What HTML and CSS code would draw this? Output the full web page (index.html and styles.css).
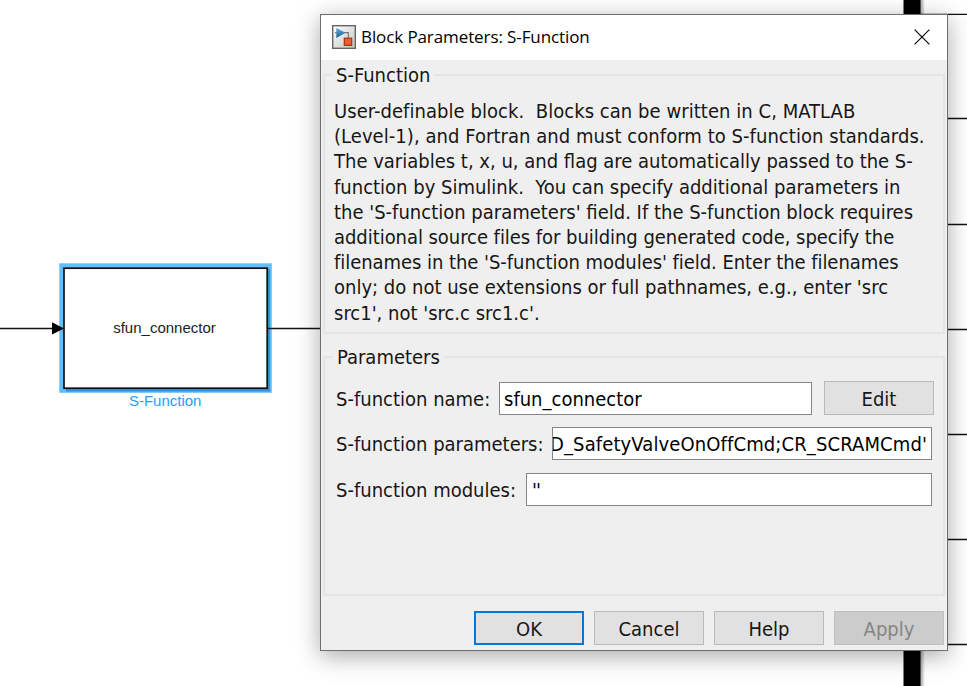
FILE: index.html
```html
<!DOCTYPE html>
<html lang="en">
<head>
<meta charset="utf-8">
<title>Block Parameters: S-Function</title>
<link rel="stylesheet" href="styles.css">
</head>
<body>
<main class="canvas">
  <svg class="diagram" width="967" height="686" viewBox="0 0 967 686">
    <defs>
      <linearGradient id="barShade"><stop offset="0" stop-color="#999"/><stop offset="1" stop-color="#fff"/></linearGradient>
    </defs>
    <rect x="920" y="0" width="5" height="686" fill="url(#barShade)"/>
    <rect x="903.5" y="0" width="17" height="686" fill="#000"/>
    <path d="M0 328.5H54M268 328.5H330M920 14.3h47M940 118.5h27M940 224.5h27M940 329.5h27M940 434.5h27M940 539.5h27M940 644.5h27" stroke="#111" stroke-width="1.3" fill="none"/>
    <rect x="59.3" y="263.3" width="212.5" height="129.5" fill="#62bdfb"/>
    <path d="M268.5 269v121H66" fill="none" stroke="#2f83c4" stroke-width="3" opacity=".75"/>
    <rect x="64" y="268.2" width="203.2" height="120" fill="#fff" stroke="#111" stroke-width="1.7"/>
    <path d="M268 328.5h4" stroke="#111" stroke-width="1.3"/>
    <path d="M52 322.3L64 328.5L52 334.5Z" fill="#000"/>
    <text class="block-text" x="164.5" y="333" text-anchor="middle">sfun_connector</text>
    <text class="block-name" x="165.2" y="406.3" text-anchor="middle">S-Function</text>
  </svg>

  <section class="dialog">
    <header class="titlebar">
      <svg class="app-icon" width="24" height="24" viewBox="0 0 24 24">
        <defs>
          <linearGradient id="face" x2="1" y2="1"><stop offset="0" stop-color="#fff"/><stop offset="1" stop-color="#c4c4c4"/></linearGradient>
          <linearGradient id="tri" x2="0" y2="1"><stop offset="0" stop-color="#5fb0dc"/><stop offset="1" stop-color="#15608f"/></linearGradient>
        </defs>
        <rect x=".7" y=".7" width="22.6" height="22.6" fill="url(#face)" stroke="#666" stroke-width="1.4"/>
        <path d="M3 7.7H16.3V13" fill="none" stroke="#777" stroke-width="1.2"/>
        <path d="M4.3 3L13.5 7.7L4.3 13Z" fill="url(#tri)"/>
        <rect x="12.3" y="13.2" width="7.4" height="7.2" fill="#e4602c" stroke="#a8320c" stroke-width="1.2"/>
      </svg>
      <h1>Block Parameters: S-Function</h1>
      <svg class="close" width="16" height="16" viewBox="0 0 16 16"><path d="M.6.6L15.4 15.4M15.4.6L.6 15.4" stroke="#000" stroke-width="1.15"/></svg>
    </header>

    <div class="content">
      <fieldset class="group about">
        <legend>S-Function</legend>
        <p>
          <span class="wide">User-definable block.&nbsp; Blocks can be written in C, MATLAB</span>
          <span class="wide">(Level-1), and Fortran and must conform to S-function standards.</span>
          <span>The variables t, x, u, and flag are automatically passed to the S-</span>
          <span>function by Simulink.&nbsp; You can specify additional parameters in</span>
          <span>the 'S-function parameters' field. If the S-function block requires</span>
          <span class="tight">additional source files for building generated code, specify the</span>
          <span class="tight">filenames in the 'S-function modules' field. Enter the filenames</span>
          <span>only; do not use extensions or full pathnames, e.g., enter 'src</span>
          <span>src1', not 'src.c src1.c'.</span>
        </p>
      </fieldset>

      <fieldset class="group params">
        <legend>Parameters</legend>
        <div class="row"><span class="label name">S-function name:</span><div class="field">sfun_connector</div><button class="edit">Edit</button></div>
        <div class="row"><span class="label parameters">S-function parameters:</span><div class="field scrolled"><span>D_SafetyValveOnOffCmd;CR_SCRAMCmd'</span></div></div>
        <div class="row"><span class="label modules">S-function modules:</span><div class="field quotes">''</div></div>
      </fieldset>
    </div>

    <footer class="actions">
      <button class="primary">OK</button>
      <button>Cancel</button>
      <button>Help</button>
      <button disabled>Apply</button>
    </footer>
  </section>
</main>
</body>
</html>
```
FILE: styles.css
```css
* { box-sizing: border-box; }
body { margin: 0; overflow: hidden; background: #fff; }

.canvas { position: relative; width: 967px; height: 686px; overflow: hidden; }
.diagram { display: block; }
.block-text, .block-name { font: 15px "Liberation Sans", Arial, sans-serif; fill: #222; }
.block-name { fill: #2a9df8; }

.dialog {
  position: absolute;
  left: 320px;
  top: 14px;
  width: 628px;
  height: 637px;
  display: flex;
  flex-direction: column;
  border: 1px solid #6e6e6e;
  background: #efefef;
  box-shadow: 0 5px 22px rgba(0, 0, 0, .34);
  color: #161616;
  font: 20px "DejaVu Sans Condensed", "DejaVu Sans", Tahoma, sans-serif;
}

.titlebar { display: flex; align-items: center; flex: none; height: 45px; padding: 0 17px 2px 11px; background: #fff; }
.app-icon { flex: none; }
.titlebar h1 { flex: 1; margin: 0 0 0 5px; color: #000; font: 400 17px/24px "Open Sans", "Segoe UI", sans-serif; letter-spacing: -.1px; }

.content { display: flex; flex-direction: column; padding: 2px 2px 0; }
.group { min-width: 0; margin: 0; padding: 0 11px; border: 2px solid #e4e4e4; }
.group legend { margin-left: -4px; padding: 0 4px; line-height: 26px; }
.about { height: 272px; }
.about p { margin: 11px 0 0 -2px; line-height: 25.2px; }
.about span { display: block; white-space: nowrap; }
.about .wide { letter-spacing: .05px; }
.about .tight { letter-spacing: -.05px; }
.params { height: 252px; margin-top: 10px; }
.params legend { margin-left: -3px; }

.row { display: flex; align-items: center; height: 34px; margin-bottom: 11.7px; }
.params legend + .row { margin-top: 11px; }
.label { flex: none; padding-top: 1px; white-space: nowrap; }
.label.name { width: 163px; }
.label.parameters { width: 216px; }
.label.modules { width: 190px; }
.field { flex: 1; height: 33px; padding: 1px 4px 0; border: 1px solid #858585; background: #fff; color: #000; line-height: 31px; overflow: hidden; white-space: nowrap; }
.field.scrolled { display: flex; justify-content: flex-end; padding: 1px 4px 0 0; letter-spacing: .12px; }
.field.quotes { padding-left: 5px; letter-spacing: -1px; }

button { width: 110px; height: 34px; padding: 2px 0 0; border: 1px solid #b9b9b9; border-radius: 0; background: #e1e1e1; color: #161616; font: inherit; }
.edit { margin-left: 12px; margin-right: -2px; }
.actions { display: flex; justify-content: flex-end; gap: 10px; padding: 15px 3px 0 0; }
.primary { border: 2px solid #0078d7; }
button:disabled { border-color: #bfbfbf; background: #ccc; color: #858585; }
```
